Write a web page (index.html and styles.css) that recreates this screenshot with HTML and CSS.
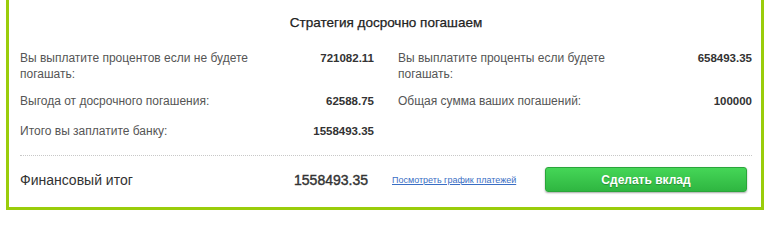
FILE: index.html
```html
<!DOCTYPE html>
<html lang="ru">
<head>
<meta charset="utf-8">
<link rel="stylesheet" href="styles.css">
</head>
<body>
<div class="box">
  <h2 class="title">Стратегия досрочно погашаем</h2>
  <div class="grid">
    <div class="cell r1">
      <span class="label">Вы выплатите процентов если не будете погашать:</span>
      <span class="value">721082.11</span>
    </div>
    <div class="cell r1">
      <span class="label">Вы выплатите проценты если будете погашать:</span>
      <span class="value">658493.35</span>
    </div>
    <div class="cell r2">
      <span class="label">Выгода от досрочного погашения:</span>
      <span class="value">62588.75</span>
    </div>
    <div class="cell r2">
      <span class="label">Общая сумма ваших погашений:</span>
      <span class="value">100000</span>
    </div>
    <div class="cell r3">
      <span class="label">Итого вы заплатите банку:</span>
      <span class="value">1558493.35</span>
    </div>
  </div>
  <div class="footer">
    <div class="total">
      <span class="total-label">Финансовый итог</span>
      <span class="total-value">1558493.35</span>
    </div>
    <a class="link" href="#">Посмотреть график платежей</a>
    <button class="btn">Сделать вклад</button>
  </div>
</div>
</body>
</html>
```
FILE: styles.css
```css
html, body {
  margin: 0;
  padding: 0;
  background: #fff;
}
body {
  font-family: Arial, "Liberation Sans", sans-serif;
  color: #444;
}
.box {
  box-sizing: border-box;
  margin-left: 6px;
  width: 758px;
  height: 210px;
  border: 3px solid #9acd0a;
  border-top: none;
  padding: 14px 9px 0 11px;
}
.title {
  margin: 0 0 18px;
  text-align: center;
  font-size: 13.5px;
  line-height: 18px;
  font-weight: normal;
  color: #222;
  -webkit-text-stroke: 0.25px #222;
}
.grid {
  display: grid;
  grid-template-columns: 1fr 1fr;
  column-gap: 24px;
}
.cell {
  display: flex;
  justify-content: space-between;
  align-items: flex-start;
}
.cell.r1 { margin-bottom: 11px; }
.cell.r2 { margin-bottom: 14px; }
.label {
  width: 240px;
  font-size: 12px;
  line-height: 16px;
  color: #555;
}
.value {
  font-size: 11.5px;
  line-height: 16px;
  font-weight: bold;
  color: #333;
}
.footer {
  margin-top: 16px;
  border-top: 1px dotted #c8c8c8;
  padding-top: 11px;
  display: flex;
  align-items: center;
}
.total {
  width: 348px;
  display: flex;
  justify-content: space-between;
  align-items: center;
}
.total-label {
  font-size: 14px;
  color: #333;
}
.total-value {
  font-size: 14px;
  color: #333;
  -webkit-text-stroke: 0.4px #333;
}
.link {
  margin-left: 24px;
  font-size: 9px;
  color: #3a6ec4;
  text-decoration: underline;
}
.btn {
  margin-left: auto;
  margin-right: 5px;
  width: 202px;
  height: 25px;
  border: 1px solid #2aa63a;
  border-radius: 3px;
  background: linear-gradient(#45d657, #2fb641);
  box-shadow: 0 1px 2px rgba(0, 0, 0, 0.35);
  color: #fff;
  font-family: Arial, "Liberation Sans", sans-serif;
  font-size: 12px;
  font-weight: bold;
  text-shadow: 0 1px 1px rgba(0, 0, 0, 0.25);
  padding: 0;
}
```
